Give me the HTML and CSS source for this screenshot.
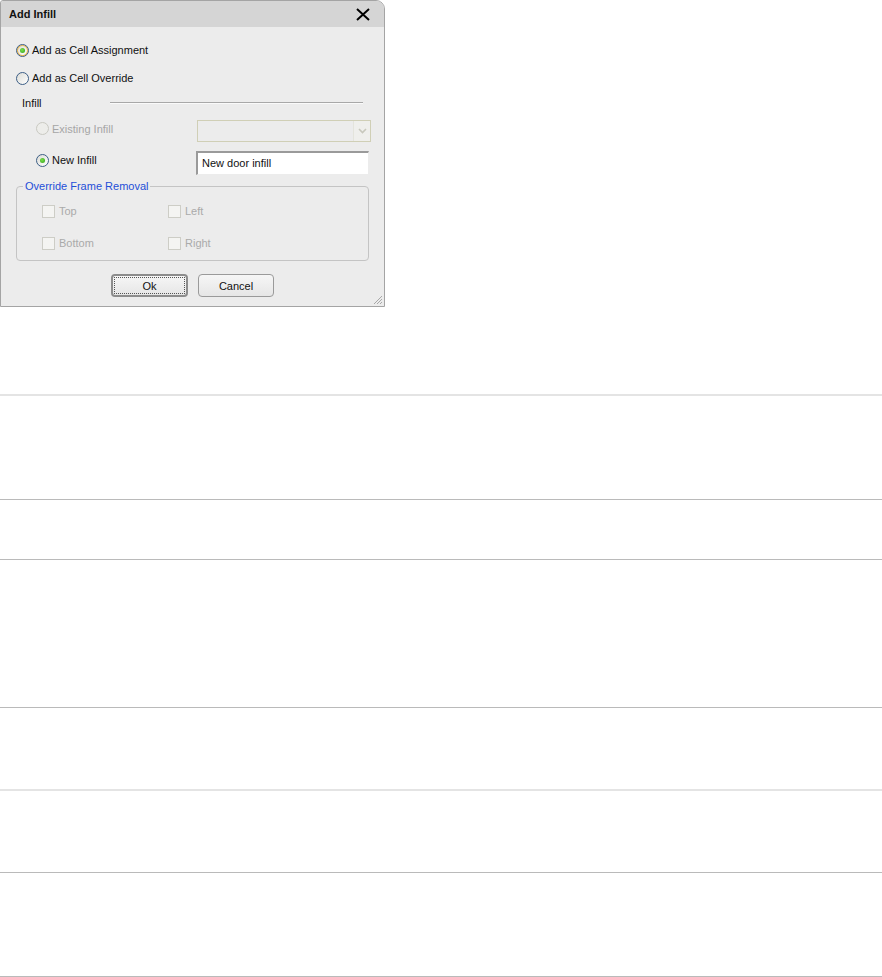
FILE: index.html
```html
<!DOCTYPE html>
<html lang="en">
<head>
    <meta charset="UTF-8">
    <title>Add Infill</title>
    <link rel="stylesheet" href="styles.css">
</head>
<body>

<div class="dialog">
    <div class="titlebar">
        <span class="title">Add Infill</span>
        <svg class="close" width="14" height="13" viewBox="0 0 14 13">
            <path d="M1 1 L13 12 M13 1 L1 12" stroke="#000" stroke-width="2" fill="none"/>
        </svg>
    </div>

    <div class="content">
        <div class="opt">
            <span class="radio checked hot"></span>
            <span>Add as Cell Assignment</span>
        </div>
        <div class="opt">
            <span class="radio"></span>
            <span>Add as Cell Override</span>
        </div>

        <div class="section-head">
            <span class="section-label">Infill</span>
            <span class="section-line"></span>
        </div>

        <div class="infill-row existing">
            <div class="infill-opt disabled">
                <span class="radio off"></span>
                <span>Existing Infill</span>
            </div>
            <div class="select">
                <span class="select-btn">
                    <svg width="9" height="6" viewBox="0 0 9 6"><path d="M1 1 L4.5 4.5 L8 1" stroke="#c8c8bc" stroke-width="1.6" fill="none"/></svg>
                </span>
            </div>
        </div>

        <div class="infill-row newrow">
            <div class="infill-opt">
                <span class="radio checked"></span>
                <span>New Infill</span>
            </div>
            <div class="textbox">New door infill</div>
        </div>

        <fieldset class="group">
            <legend>Override Frame Removal</legend>
            <div class="checks">
                <div class="check"><span class="box"></span><span>Top</span></div>
                <div class="check"><span class="box"></span><span>Left</span></div>
                <div class="check"><span class="box"></span><span>Bottom</span></div>
                <div class="check"><span class="box"></span><span>Right</span></div>
            </div>
        </fieldset>

        <div class="buttons">
            <button class="btn default"><span class="focus">Ok</span></button>
            <button class="btn">Cancel</button>
        </div>
    </div>

    <svg class="grip" width="11" height="11" viewBox="0 0 11 11">
        <path d="M10 2 L2 10 M10 5 L5 10 M10 8 L8 10" stroke="#a8a8a8" stroke-width="1" fill="none"/>
    </svg>
</div>

<div class="rows">
    <div class="row light" style="height: 103px"></div>
    <div class="row" style="height: 59px"></div>
    <div class="row" style="height: 147px"></div>
    <div class="row" style="height: 81px"></div>
    <div class="row light" style="height: 81px"></div>
    <div class="row" style="height: 103px"></div>
    <div class="row" style="height: 0"></div>
</div>

</body>
</html>
```

FILE: styles.css
```css
body {
    margin: 0;
    background-color: #fff;
    font-family: "Liberation Sans", Arial, sans-serif;
    font-size: 11px;
    color: #111;
}

.dialog {
    position: relative;
    width: 383px;
    height: 305px;
    border: 1px solid #a4a4a4;
    border-radius: 3px 9px 0 0;
    background-color: #ececec;
    overflow: hidden;
}

.titlebar {
    height: 26px;
    background-color: #d5d5d5;
    display: flex;
    align-items: center;
    justify-content: space-between;
    padding: 0 14px 0 8px;
}

.title {
    font-weight: bold;
    font-size: 11px;
    color: #111;
}

.close {
    margin-top: 1px;
}

.content {
    padding: 9px 0 0 15px;
}

.opt {
    display: flex;
    align-items: center;
    height: 28px;
    gap: 3px;
}

.radio {
    display: inline-block;
    box-sizing: border-box;
    width: 13px;
    height: 13px;
    border-radius: 50%;
    border: 1px solid #3c5e86;
    background: linear-gradient(135deg, #dcdcd6, #fff);
    position: relative;
}

.radio.checked::after {
    content: "";
    position: absolute;
    left: 3px;
    top: 3px;
    width: 5px;
    height: 5px;
    border-radius: 50%;
    background: radial-gradient(circle at 40% 40%, #7be04a, #2ea01a);
}

.radio.hot {
    box-shadow: inset 0 0 0 1px #f0b84a;
}

.radio.off {
    border-color: #c9c9c2;
    background: #ededea;
}

.section-head {
    display: flex;
    align-items: center;
    height: 22px;
    padding-left: 6px;
}

.section-label {
    width: 88px;
}

.section-line {
    width: 253px;
    height: 0;
    border-top: 1px solid #a8a8a8;
    border-bottom: 1px solid #fafafa;
}

.infill-row {
    display: flex;
    align-items: center;
    padding-left: 20px;
}

.infill-row.existing {
    margin-top: 5px;
    height: 24px;
}

.infill-row.newrow {
    margin-top: 7px;
    height: 26px;
}

.infill-opt {
    display: flex;
    align-items: center;
    gap: 3px;
    width: 160px;
}

.infill-opt.disabled {
    color: #a6a6a6;
    margin-top: -5px;
}

.newrow .infill-opt {
    margin-top: -6px;
}

.select {
    box-sizing: border-box;
    width: 174px;
    height: 22px;
    margin-left: 1px;
    border: 1px solid #d0cfb6;
    background-color: #ececec;
    display: flex;
    justify-content: flex-end;
}

.select-btn {
    box-sizing: border-box;
    width: 17px;
    height: 20px;
    border-left: 1px solid #e4e4dc;
    background-color: #efefec;
    display: flex;
    align-items: center;
    justify-content: center;
}

.textbox {
    box-sizing: border-box;
    width: 173px;
    height: 24px;
    border-top: 2px solid #9a9a9a;
    border-left: 2px solid #9a9a9a;
    border-right: 1px solid #ececec;
    border-bottom: 1px solid #ececec;
    background-color: #fff;
    padding: 4px 0 0 4px;
    color: #111;
}

.group {
    margin: 4px 0 0 0;
    padding: 0;
    width: 353px;
    box-sizing: border-box;
    height: 81px;
    border: 1px solid #c4c4c4;
    border-radius: 4px;
}

.group legend {
    color: #1f4fd8;
    margin-left: 6px;
    padding: 0 2px;
    line-height: 13px;
}

.checks {
    display: grid;
    grid-template-columns: 126px 126px;
    grid-auto-rows: 32px;
    margin: 2px 0 0 25px;
}

.check {
    display: flex;
    align-items: center;
    gap: 4px;
    color: #aaaaaa;
}

.box {
    display: inline-block;
    box-sizing: border-box;
    width: 13px;
    height: 13px;
    border: 1px solid #cdcdc6;
    background-color: #f4f4f2;
}

.buttons {
    display: flex;
    justify-content: center;
    gap: 10px;
    margin: 13px 0 0 -15px;
}

.btn {
    box-sizing: border-box;
    width: 76px;
    height: 23px;
    border: 1px solid #9a9a9a;
    border-radius: 4px;
    background: linear-gradient(#f6f6f6, #e6e6e6);
    font-family: "Liberation Sans", Arial, sans-serif;
    font-size: 11px;
    color: #111;
    padding: 0;
}

.btn.default {
    width: 77px;
    border: 2px solid #8c8c8c;
    padding: 1px;
}

.focus {
    display: flex;
    align-items: center;
    justify-content: center;
    height: 100%;
    border: 1px dotted #555;
    box-sizing: border-box;
}

.grip {
    position: absolute;
    right: 1px;
    bottom: 1px;
}

.rows {
    margin-top: 87px;
}

.row {
    border-top: 1px solid #bababa;
}

.row.light {
    border-top: 2px solid #e4e4e4;
}
```
